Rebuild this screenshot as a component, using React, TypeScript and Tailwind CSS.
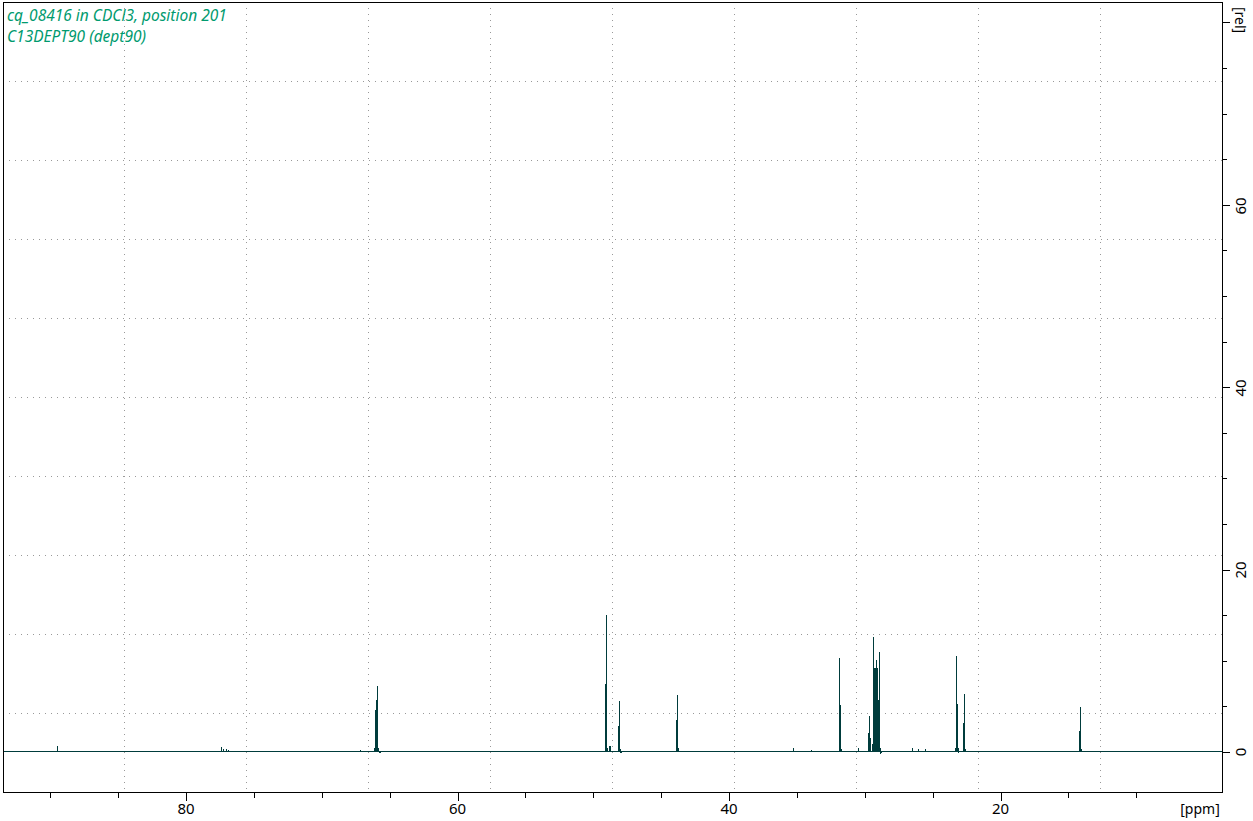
const L = 3, T = 2, R = 1222, B = 792, BASE = 751;
const ppmX = (p: number) => 186 + (80 - p) * 13.575;

// [x, top y] pairs for spectrum lines
const peaks: [number, number][] = [
  [57, 746], [221, 747], [223, 749], [226, 749], [228, 750],
  [360, 750], [374, 748], [375, 710], [376, 700], [377, 686], [378, 748],
  [605, 684], [606, 615], [607, 748], [609, 746], [610, 746],
  [618, 726], [619, 701], [620, 749],
  [676, 720], [677, 695], [678, 748],
  [793, 748], [811, 750],
  [839, 658], [840, 705], [841, 749], [858, 748],
  [868, 733], [869, 716], [870, 738],
  [872, 744], [873, 637], [874, 668], [875, 668], [876, 660], [877, 668], [878, 700], [879, 652], [880, 748],
  [912, 748], [918, 749], [925, 749],
  [955, 748], [956, 656], [957, 704], [958, 748],
  [963, 723], [964, 694], [965, 749],
  [1079, 731], [1080, 707], [1081, 749],
];
// small dips below the baseline
const dips: [number, number][] = [[379, 753], [380, 753], [620, 753], [621, 753], [880, 754], [881, 753], [958, 753]];

const vGrid = Array.from({ length: 9 }, (_, i) => 124 + i * 122);
const hGrid = Array.from({ length: 9 }, (_, i) => 81 + i * 79);
const yTicks = Array.from({ length: 17 }, (_, i) => 752 - i * 45.6);
const xTicks = Array.from({ length: 17 }, (_, i) => 10 + i * 5).filter((p) => ppmX(p) > L && ppmX(p) < R);

export default function App() {
  return (
    <div className="w-[1253px] h-[821px] bg-white overflow-hidden font-['DejaVu_Sans',Verdana,sans-serif]">
      <svg width={1253} height={821}>
        {vGrid.map((x) => (
          <line key={x} x1={x + 0.5} y1={T} x2={x + 0.5} y2={B} stroke="#999" strokeDasharray="1 5" />
        ))}
        {hGrid.map((y) => (
          <line key={y} x1={L} y1={y + 0.5} x2={R} y2={y + 0.5} stroke="#999" strokeDasharray="1 5" />
        ))}
        <line x1={L} y1={BASE + 0.5} x2={R} y2={BASE + 0.5} stroke="#003c3c" />
        {peaks.map(([x, y], i) => (
          <line key={i} x1={x + 0.5} y1={BASE} x2={x + 0.5} y2={y} stroke="#003c3c" />
        ))}
        {dips.map(([x, y], i) => (
          <line key={i} x1={x + 0.5} y1={BASE} x2={x + 0.5} y2={y} stroke="#003c3c" />
        ))}
        <rect x={L + 0.5} y={T + 0.5} width={R - L} height={B - T} fill="none" stroke="#000" />
        {yTicks.map((y, i) => (
          <line key={i} x1={R} y1={Math.round(y) + 0.5} x2={i % 4 === 0 ? R + 8 : R + 5} y2={Math.round(y) + 0.5} stroke="#000" />
        ))}
        {xTicks.map((p) => (
          <line key={p} x1={Math.round(ppmX(p)) + 0.5} y1={B} x2={Math.round(ppmX(p)) + 0.5} y2={p % 20 === 0 ? B + 9 : B + 6} stroke="#000" />
        ))}
        {[0, 20, 40, 60].map((v, i) => (
          <text key={v} x={1240} y={752 - i * 182} fontSize={15} fill="#000" textAnchor="middle" dominantBaseline="central" transform={`rotate(-90 1240 ${752 - i * 182})`}>
            {v}
          </text>
        ))}
        <text x={1240} y={20} fontSize={14} fill="#000" textAnchor="middle" dominantBaseline="central" transform="rotate(90 1240 20)">[rel]</text>
        {[80, 60, 40, 20].map((p) => (
          <text key={p} x={ppmX(p)} y={814} fontSize={15} fill="#000" textAnchor="middle">{p}</text>
        ))}
        <text x={1200} y={814} fontSize={14} fill="#000" textAnchor="middle">[ppm]</text>
        <text x={7} y={21} fontSize={15.5} fontStyle="italic" fill="#009a6e">cq_08416 in CDCl3, position 201</text>
        <text x={7} y={42} fontSize={15.5} fontStyle="italic" fill="#009a6e">C13DEPT90 (dept90)</text>
      </svg>
    </div>
  );
}
